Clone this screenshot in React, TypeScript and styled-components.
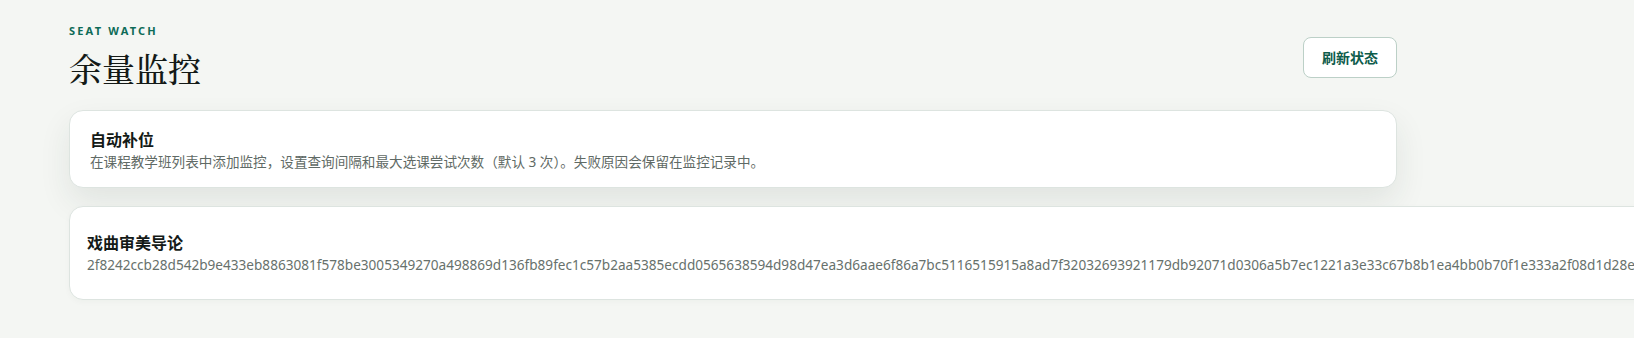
import React from 'react';
import styled, { createGlobalStyle } from 'styled-components';

const GlobalStyle = createGlobalStyle`
  html, body {
    margin: 0;
    padding: 0;
    overflow-x: hidden;
    background: #f4f6f3;
  }
  body {
    font-family: "Noto Sans", "Noto Sans CJK SC", sans-serif;
    color: #18201c;
  }
`;

const Page = styled.div`
  padding: 24px 69px 40px;
  max-width: 1328px;
`;

const Header = styled.header`
  display: flex;
  align-items: center;
  justify-content: space-between;
  margin-bottom: 20px;
`;

const Eyebrow = styled.div`
  font-size: 11px;
  font-weight: 700;
  letter-spacing: 0.2em;
  text-transform: uppercase;
  color: #0d6b57;
  line-height: 14px;
`;

const Title = styled.h1`
  margin: 8px 0 0;
  font-family: "Noto Serif CJK SC", "Liberation Serif", serif;
  font-size: 33px;
  font-weight: 500;
  line-height: 44px;
  color: #141a17;
`;

const RefreshButton = styled.button`
  height: 41px;
  padding: 0 18px;
  border: 1px solid #bcd0c7;
  border-radius: 8px;
  background: #ffffff;
  color: #0e5c4b;
  font-family: "Noto Sans CJK SC", sans-serif;
  font-size: 14px;
  font-weight: 700;
  cursor: pointer;
`;

const Stack = styled.div`
  display: flex;
  flex-direction: column;
  align-items: flex-start;
  gap: 18px;
`;

const Card = styled.section<{ $wide?: boolean }>`
  box-sizing: border-box;
  background: #ffffff;
  border: 1px solid #dde4e0;
  border-radius: 14px;
  width: ${p => (p.$wide ? 'max-content' : '100%')};
  min-width: 100%;
  padding: ${p => (p.$wide ? '24px 17px 24px' : '17px 20px 15px')};
  box-shadow: ${p =>
    p.$wide ? '0 2px 6px rgba(30, 50, 40, 0.03)' : '0 14px 32px rgba(30, 55, 42, 0.09)'};
`;

const CardTitle = styled.h2`
  margin: 0;
  font-family: "Noto Sans CJK SC", sans-serif;
  font-size: 16px;
  font-weight: 700;
  line-height: 22px;
  color: #141a17;
`;

const CardText = styled.p<{ $mono?: boolean }>`
  margin: 2px 0 0;
  font-size: 13.6px;
  line-height: 20px;
  color: ${p => (p.$mono ? '#67716c' : '#5f6a65')};
  white-space: nowrap;
`;

const hash =
  '2f8242ccb28d542b9e433eb8863081f578be3005349270a498869d136fb89fec1c57b2aa5385ecdd0565638594d98d47ea3d6aae6f86a7bc5116515915a8ad7f32032693921179db92071d0306a5b7ec1221a3e33c67b8b1ea4bb0b70f1e333a2f08d1d28e41c9a07';

export default function App() {
  return (
    <>
      <GlobalStyle />
      <Page>
        <Header>
          <div>
            <Eyebrow>Seat Watch</Eyebrow>
            <Title>余量监控</Title>
          </div>
          <RefreshButton>刷新状态</RefreshButton>
        </Header>
        <Stack>
          <Card>
            <CardTitle>自动补位</CardTitle>
            <CardText>
              在课程教学班列表中添加监控，设置查询间隔和最大选课尝试次数（默认 3 次）。失败原因会保留在监控记录中。
            </CardText>
          </Card>
          <Card $wide>
            <CardTitle>戏曲审美导论</CardTitle>
            <CardText $mono>{hash}</CardText>
          </Card>
        </Stack>
      </Page>
    </>
  );
}
